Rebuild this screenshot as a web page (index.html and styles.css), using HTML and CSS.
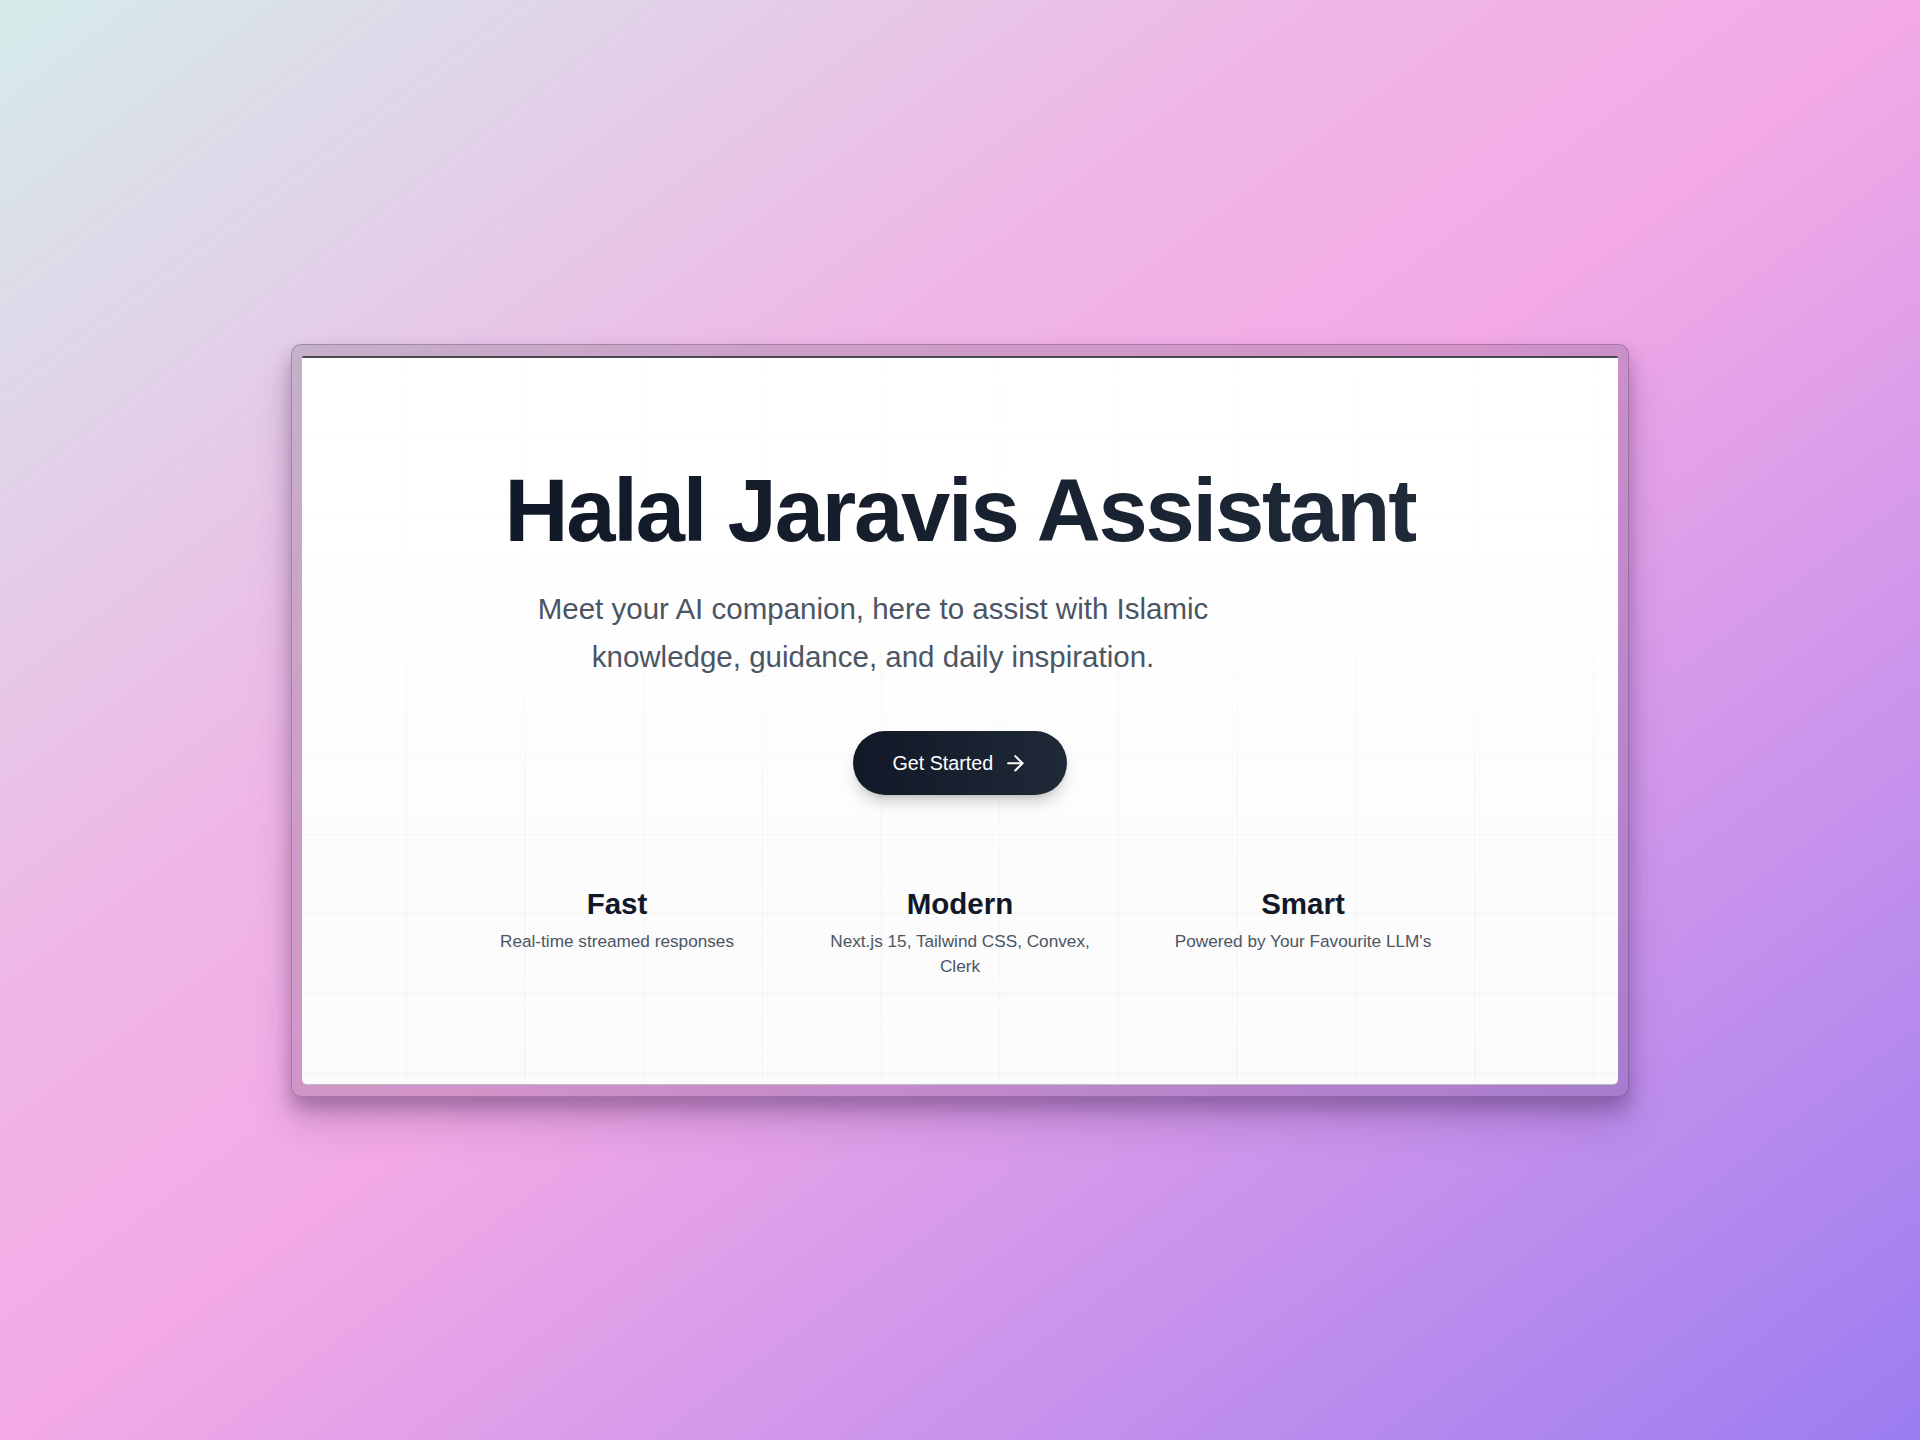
FILE: index.html
```html
<!DOCTYPE html>
<html lang="en">
<head>
<meta charset="utf-8">
<title>Halal Jaravis Assistant</title>
<link rel="stylesheet" href="styles.css">
</head>
<body>
  <div class="frame">
    <main class="window">
      <section class="hero">
        <h1 class="title">Halal Jaravis Assistant</h1>
        <p class="subtitle">Meet your AI companion, here to assist with Islamic knowledge, guidance, and daily inspiration.</p>
        <button class="cta" type="button">
          <span>Get Started</span>
          <svg class="cta-icon" viewBox="0 0 24 24" fill="none" stroke="currentColor" stroke-width="2" stroke-linecap="round" stroke-linejoin="round" aria-hidden="true">
            <path d="M5 12h14"/>
            <path d="m12 5 7 7-7 7"/>
          </svg>
        </button>
        <div class="features">
          <div class="feature">
            <h2 class="feature-title">Fast</h2>
            <p class="feature-text">Real-time streamed responses</p>
          </div>
          <div class="feature">
            <h2 class="feature-title">Modern</h2>
            <p class="feature-text">Next.js 15, Tailwind CSS, Convex, Clerk</p>
          </div>
          <div class="feature">
            <h2 class="feature-title">Smart</h2>
            <p class="feature-text">Powered by Your Favourite LLM's</p>
          </div>
        </div>
      </section>
    </main>
  </div>
</body>
</html>
```

FILE: styles.css
```css
html, body {
  margin: 0;
  padding: 0;
}

body {
  width: 1920px;
  height: 1440px;
  background: linear-gradient(to bottom right, #d5ecea 0%, #efb6e6 35%, #f3aae6 50%, #c993ec 75%, #9b7df0 100%);
  font-family: "Liberation Sans", Arial, sans-serif;
  display: flex;
  align-items: center;
  justify-content: center;
}

.frame {
  width: 1338px;
  height: 753px;
  box-sizing: border-box;
  padding: 11px 10px;
  border-radius: 10px;
  background: rgba(45, 35, 55, 0.17);
  border: 1px solid rgba(50, 30, 60, 0.25);
  box-shadow: 0 12px 18px rgba(60, 30, 80, 0.32), 0 26px 40px rgba(60, 30, 80, 0.18);
  display: flex;
}

.window {
  flex: 1;
  border-top: 2px solid #4a4950;
  border-bottom: 1px solid rgba(80, 60, 90, 0.35);
  border-radius: 2px 2px 5px 5px;
  background-color: #ffffff;
  background-image:
    linear-gradient(to bottom, rgba(255, 255, 255, 0.9) 0%, rgba(255, 255, 255, 0.55) 35%, rgba(255, 255, 255, 0) 60%),
    linear-gradient(to right, rgba(20, 20, 40, 0.035) 1px, transparent 1px),
    linear-gradient(to bottom, rgba(20, 20, 40, 0.035) 1px, transparent 1px),
    linear-gradient(to bottom, #ffffff 0%, #fbfbfc 100%);
  background-size: 100% 100%, 118.7px 79.5px, 118.7px 79.5px, 100% 100%;
  background-position: 0 0, 104px -1px, 104px -1px, 0 0;
  overflow: hidden;
}

.hero {
  display: flex;
  flex-direction: column;
  align-items: center;
  padding-top: 109px;
}

.title {
  margin: 0 0 30px 0;
  font-size: 88.6px;
  line-height: 88.6px;
  font-weight: 700;
  letter-spacing: -0.025em;
  background: linear-gradient(to right, #111827, #1f2937);
  -webkit-background-clip: text;
  background-clip: text;
  color: transparent;
  white-space: nowrap;
}

.subtitle {
  margin: 0 174px 50px 0;
  max-width: 760px;
  text-align: center;
  font-size: 29.5px;
  line-height: 48px;
  color: #4b5563;
}

.cta {
  display: flex;
  align-items: center;
  gap: 9.8px;
  height: 64px;
  padding: 0 39.4px;
  border: none;
  border-radius: 9999px;
  background: linear-gradient(to right, #111827, #1f2937);
  color: #ffffff;
  font-family: "Liberation Sans", Arial, sans-serif;
  font-size: 19.7px;
  line-height: 24.6px;
  box-shadow: 0 10px 15px -3px rgba(0, 0, 0, 0.18), 0 4px 6px -4px rgba(0, 0, 0, 0.18);
}

.cta-icon {
  width: 24.6px;
  height: 24.6px;
}

.features {
  margin-top: 89px;
  display: grid;
  grid-template-columns: repeat(3, 300px);
  column-gap: 43px;
}

.feature {
  text-align: center;
}

.feature-title {
  margin: 0 0 5.5px 0;
  font-size: 29.5px;
  line-height: 39.4px;
  font-weight: 700;
  color: #111827;
}

.feature-text {
  margin: 0;
  font-size: 17.2px;
  line-height: 24.6px;
  color: #4b5563;
}
```
